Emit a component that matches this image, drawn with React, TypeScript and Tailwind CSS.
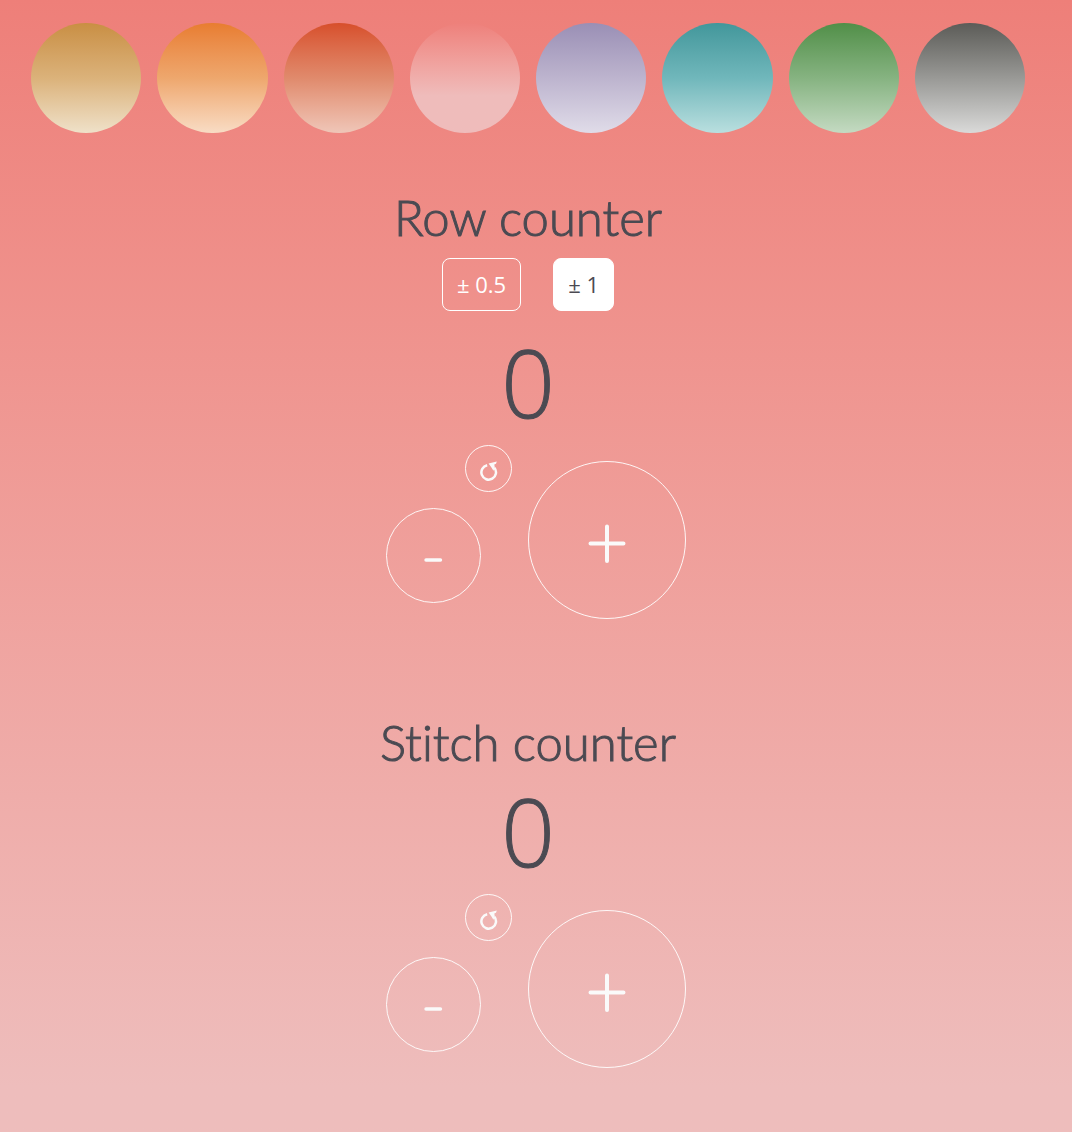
import { useState } from "react";

const swatches = [
  { name: "Ochre", gradient: "from-[#c98f43] via-[#dbb27a] to-[#efe1c9]" },
  { name: "Orange", gradient: "from-[#e87d30] via-[#eea76d] to-[#f8dcc4]" },
  { name: "Rust", gradient: "from-[#d74f2b] via-[#e08a6c] to-[#efc6b8]" },
  { name: "Pink", gradient: "from-[#ee807b] to-[#efbcbb] to-66%" },
  { name: "Lavender", gradient: "from-[#9a8fb5] via-[#bdb4ce] to-[#e0dce9]" },
  { name: "Teal", gradient: "from-[#42979b] via-[#70b7bb] to-[#b9dfdf]" },
  { name: "Green", gradient: "from-[#518f48] via-[#86b381] to-[#c4dac2]" },
  { name: "Grey", gradient: "from-[#5c5c58] via-[#999996] to-[#dadad9]" },
];

const outline = "flex items-center justify-center rounded-full border border-white/90 text-[#fafafa]";

function ResetIcon() {
  return (
    <svg viewBox="0 0 20 20" className="mt-1 size-5" aria-hidden="true">
      <path d="M8.2 4.2A7.3 7.3 0 1 0 15.4 6.8" fill="none" stroke="currentColor" strokeWidth="2.5" />
      <path d="M9.6 2.6 17.8 0.6 17 2.7 15.3 3.6 15.8 6.6 14.4 9.8 12.6 6.8Z" fill="currentColor" />
    </svg>
  );
}

function MinusIcon() {
  return (
    <svg viewBox="0 0 20 6" className="mt-2 h-1.5 w-5" aria-hidden="true">
      <path d="M2 3H16.5" stroke="currentColor" strokeWidth="3.4" strokeLinecap="round" />
    </svg>
  );
}

function PlusIcon() {
  return (
    <svg viewBox="0 0 40 40" className="mt-2 size-10" aria-hidden="true">
      <path d="M3.5 19.5H36.5M20 2.5V37" stroke="currentColor" strokeWidth="4" strokeLinecap="round" />
    </svg>
  );
}

function Title({ children }: { children: string }) {
  return (
    <h2 className="font-[Lato] text-[49px] leading-[56px] font-light [-webkit-text-stroke:1px] [font-variant-ligatures:none]">
      {children}
    </h2>
  );
}

function Counter({ label, step }: { label: string; step: number }) {
  const [count, setCount] = useState(0);
  return (
    <>
      <output aria-label={label} className="mb-1.5 text-[94px] leading-[114px] font-light [-webkit-text-stroke:1px]">
        {count}
      </output>
      <div className="flex items-start gap-4 pl-4">
        <div className="flex w-[126px] flex-col gap-4">
          <button type="button" aria-label={`Reset ${label}`} onClick={() => setCount(0)} className={`${outline} size-[47px] self-end`}>
            <ResetIcon />
          </button>
          <button type="button" aria-label={`Decrease ${label}`} onClick={() => setCount(Math.max(0, count - step))} className={`${outline} size-[95px]`}>
            <MinusIcon />
          </button>
        </div>
        <button type="button" aria-label={`Increase ${label}`} onClick={() => setCount(count + step)} className={`${outline} mt-4 size-[158px]`}>
          <PlusIcon />
        </button>
      </div>
    </>
  );
}

export default function App() {
  const [step, setStep] = useState(1);
  return (
    <main className="flex min-h-screen flex-col bg-linear-to-b from-[#ee7f79] to-[#eebdbc] to-96% pr-4 font-['Open_Sans',sans-serif] text-[#4b4a52] antialiased">
      <nav aria-label="Themes" className="grid grid-cols-8 gap-4 px-[31px] pt-[23px]">
        {swatches.map((s) => (
          <button key={s.name} type="button" aria-label={s.name} className={`aspect-square rounded-full bg-linear-to-b ${s.gradient}`} />
        ))}
      </nav>
      <section className="mt-14 flex flex-col items-center">
        <Title>Row counter</Title>
        <div className="mt-[13px] flex gap-8">
          {[0.5, 1].map((value) => (
            <button
              key={value}
              type="button"
              aria-pressed={step === value}
              onClick={() => setStep(value)}
              className={`h-[53px] rounded-lg border border-white px-3.5 text-[22px] ${step === value ? "bg-white" : "text-white"}`}
            >
              ± {value}
            </button>
          ))}
        </div>
        <div className="mt-3.5 flex flex-col items-center">
          <Counter label="row counter" step={step} />
        </div>
      </section>
      <section className="mt-[95px] flex flex-col items-center pb-16">
        <Title>Stitch counter</Title>
        <div className="mt-1 flex flex-col items-center">
          <Counter label="stitch counter" step={1} />
        </div>
      </section>
    </main>
  );
}
